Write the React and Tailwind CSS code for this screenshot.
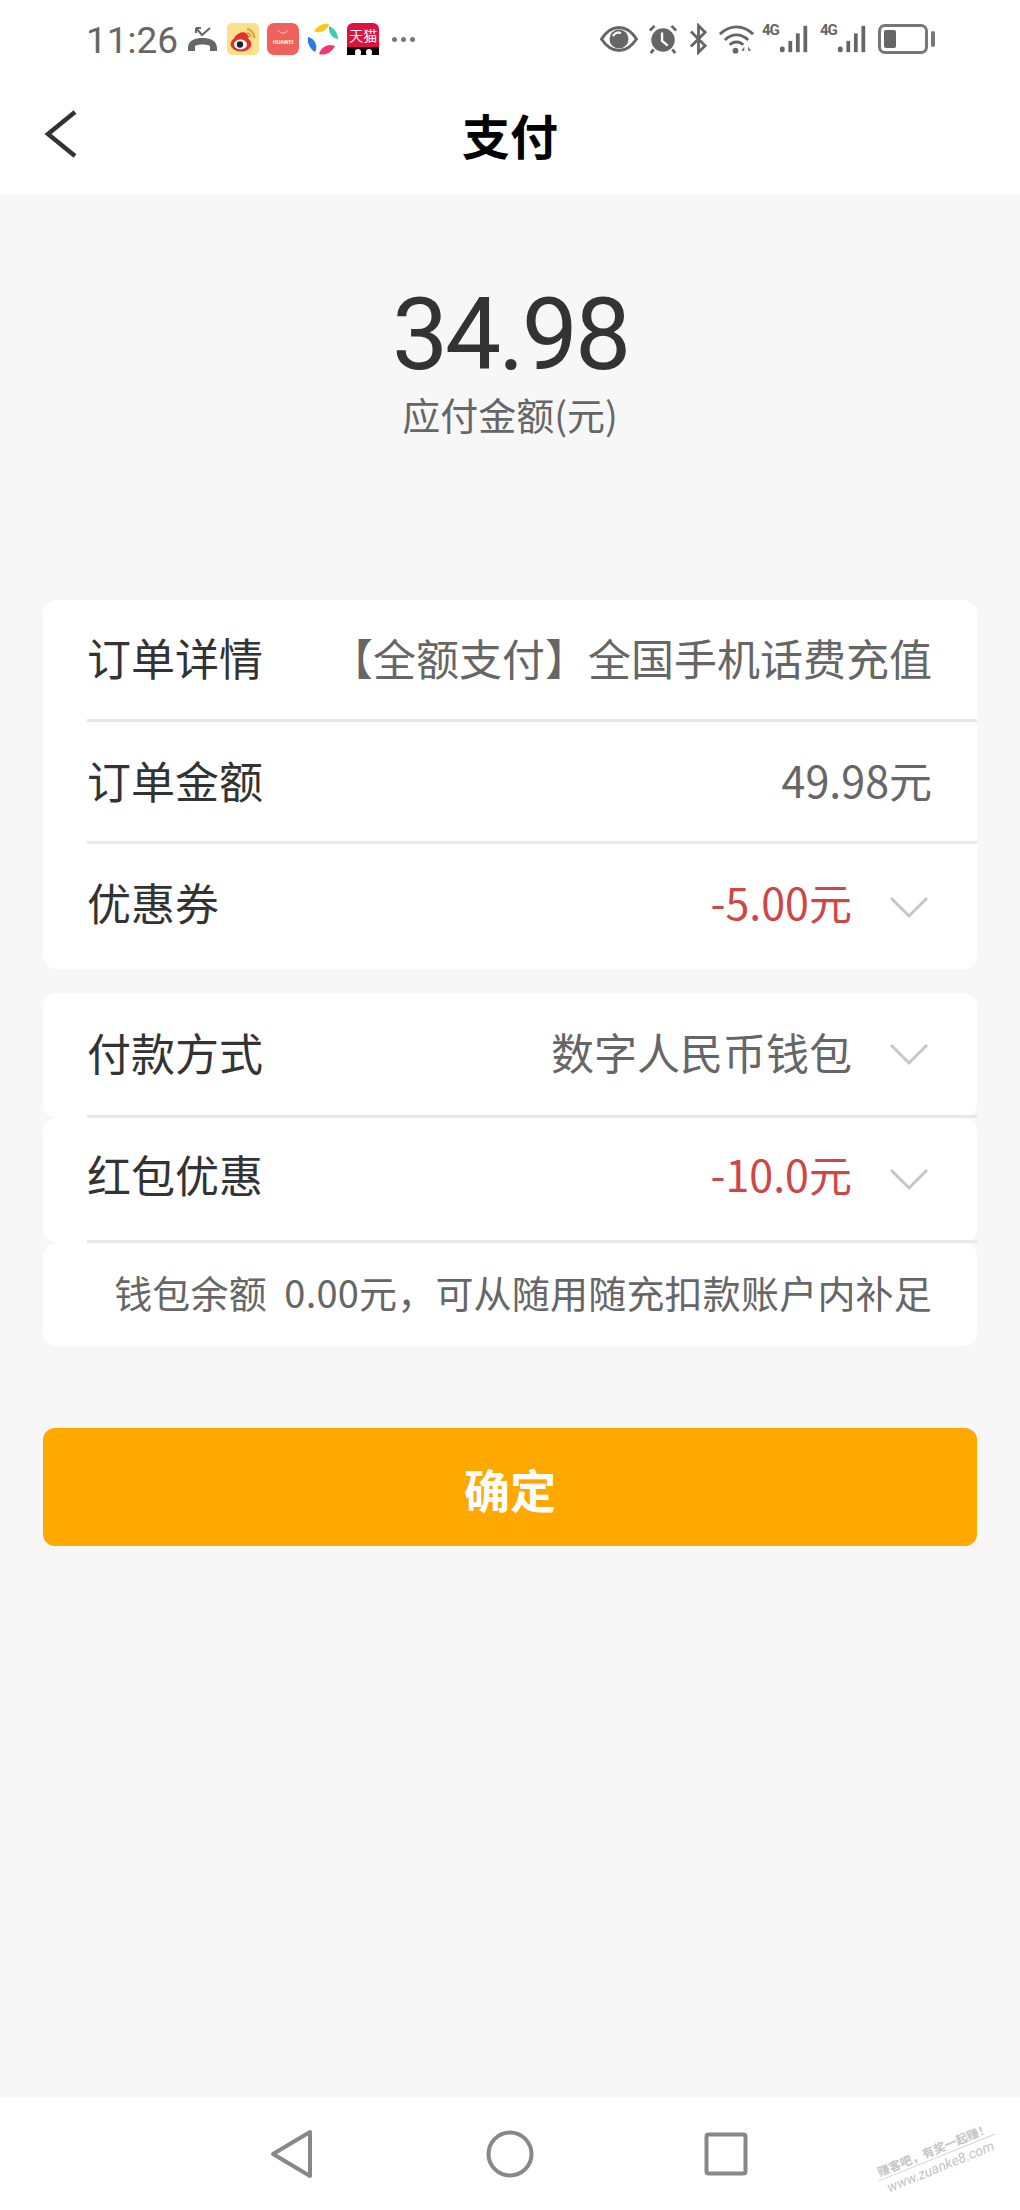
import React from "react";

const cjk = { fontFamily: '"Noto Sans CJK SC", "Noto Sans", sans-serif' };

const Chevron = () => (
  <svg width="40" height="24" viewBox="0 0 40 24" className="ml-[37px] mr-[3px] shrink-0">
    <path d="M2 3 L20 21 L38 3" fill="none" stroke="#c6c6c6" strokeWidth="3" />
  </svg>
);

const Row = ({ label, value, valueClass = "text-[#666666]", arrow, className = "", line = true, textPad = "pb-[4px]" }) => (
  <div className={`bg-white pl-[44px] ${className}`}>
    <div className={`h-full flex items-center justify-between ${line ? "border-b-[3px] border-[#e8e8e8]" : ""}`}>
      <span className={`text-[44px] leading-none text-[#333333] ${textPad}`}>{label}</span>
      <div className="flex items-center pr-[45px]">
        <span className={`text-[43px] leading-none whitespace-nowrap ${valueClass} ${textPad}`}>{value}</span>
        {arrow && <Chevron />}
      </div>
    </div>
  </div>
);

const Signal = () => (
  <div className="flex items-start w-[46px]">
    <span className="text-[15px] leading-none font-bold text-[#666666] mt-[-1px] tracking-[-1px]" style={{ fontFamily: "Roboto, sans-serif" }}>4G</span>
    <svg width="31" height="30" viewBox="0 0 31 30" className="ml-auto">
      <rect x="1" y="23" width="5" height="6" rx="2" fill="#666666" />
      <rect x="10" y="17" width="4" height="12" fill="#666666" />
      <rect x="18" y="9" width="4" height="20" fill="#666666" />
      <rect x="26" y="1" width="4" height="28" fill="#666666" />
    </svg>
  </div>
);

const StatusIcons = () => (
  <div className="flex items-center">
    <svg width="38" height="26" viewBox="0 0 38 26">
      <path d="M1.5 13 C8 3 14 1.5 19 1.5 S30 3 36.5 13 C30 23 24 24.5 19 24.5 S8 23 1.5 13 Z" fill="none" stroke="#666666" strokeWidth="3" />
      <circle cx="19" cy="13" r="9.5" fill="#666666" />
      <path d="M13 10 a7 7 0 0 1 8 -3 a6 6 0 0 0 -8 3 Z" fill="#fff" stroke="#fff" strokeWidth="2" />
    </svg>
    <svg width="30" height="32" viewBox="0 0 32 32" className="ml-[10px]">
      <circle cx="16" cy="17" r="12.5" fill="#666666" />
      <path d="M15 9 V18 L21 23" fill="none" stroke="#fff" strokeWidth="2.5" />
      <path d="M2 7 L7 2 M30 7 L25 2 M6 27 L3 31 M26 27 L29 31" stroke="#666666" strokeWidth="3" />
    </svg>
    <svg width="19" height="32" viewBox="0 0 20 32" className="ml-[11px]">
      <path d="M2 8 L17 23 L10 30 V2 L17 9 L2 24" fill="none" stroke="#666666" strokeWidth="3" />
    </svg>
    <svg width="35" height="30" viewBox="0 0 36 30" className="ml-[11px]">
      <path d="M1 10 C11 0 25 0 35 10 M6 16 C13 9 23 9 30 16 M11 21 C15 17 21 17 25 21" fill="none" stroke="#666666" strokeWidth="3" />
      <circle cx="17" cy="27" r="3" fill="#666666" />
      <path d="M26 23 L23 27 H26 Z M30 23 L33 27 H30 Z" fill="#666666" />
    </svg>
    <div className="ml-[8px]"><Signal /></div>
    <div className="ml-[12px]"><Signal /></div>
    <div className="ml-[12px] flex items-center">
      <div className="w-[50px] h-[30px] border-[3px] border-[#777777] rounded-[7px] p-[3px]">
        <div className="w-[12px] h-full bg-[#666666] rounded-[2px]" />
      </div>
      <div className="w-[4px] h-[16px] bg-[#777777] rounded-[2px] ml-[3px]" />
    </div>
  </div>
);

const AppIcons = () => (
  <div className="flex items-center gap-[8px] ml-[9px]">
    {/* missed call */}
    <svg width="31" height="26" viewBox="0 0 31 26" className="mr-[1px]">
      <path d="M1 22 C1 14 9 12 15.5 12 S30 14 30 22 L30 25 H23 V20 C20 18 11 18 8 20 V25 H1 Z" fill="#666666" />
      <path d="M9 2 L15 9 L23 2 M9 2 H14 M9 2 V7" fill="none" stroke="#666666" strokeWidth="2" />
    </svg>
    {/* weibo */}
    <svg width="32" height="32" viewBox="0 0 32 32">
      <rect width="32" height="32" rx="5" fill="#fbe08d" />
      <ellipse cx="14" cy="21" rx="10.5" ry="7.5" fill="#e0322d" />
      <path d="M7 15 C11 9 17 8 20 11 L22 14 L17 20 Z" fill="#e0322d" />
      <ellipse cx="13.5" cy="21.5" rx="6.5" ry="5" fill="#fff" />
      <circle cx="13" cy="21.5" r="3.2" fill="#222" />
      <path d="M20 6 A8 8 0 0 1 27 15 M20 10 A4 4 0 0 1 23.5 14" fill="none" stroke="#f09a2a" strokeWidth="2" />
    </svg>
    {/* huawei appgallery */}
    <div className="w-[32px] h-[32px] rounded-[7px] bg-[#f0605c] flex flex-col items-center pt-[6px]">
      <svg width="12" height="6" viewBox="0 0 12 6">
        <path d="M1 1 C3 5 9 5 11 1" fill="none" stroke="#ffc9c6" strokeWidth="1" />
      </svg>
      <span className="text-[5.5px] leading-none text-white mt-[5px] font-semibold" style={{ fontFamily: "Roboto, sans-serif" }}>HUAWEI</span>
    </div>
    {/* petal icon */}
    <svg width="32" height="32" viewBox="0 0 32 32">
      <path d="M7 8 C11 2 17 0 22 1 C21 6 14 12 7 8 Z" fill="#f9c81c" />
      <path d="M22 3 C27 5 31 10 31 16 C26 16 21 10 22 3 Z" fill="#3fcba5" />
      <path d="M1 14 C0 20 3 26 8 29 C11 24 9 16 1 14 Z" fill="#2a7de1" />
      <path d="M12 31 C18 33 24 30 28 23 C21 20 14 24 12 31 Z" fill="#ed3a73" />
    </svg>
    {/* tmall */}
    <div className="w-[32px] h-[32px] rounded-t-[6px] overflow-hidden bg-[#e0103f]" style={cjk}>
      <div className="text-[14px] leading-[24px] text-white text-center whitespace-nowrap">天猫</div>
      <div className="h-[8px] bg-black flex justify-center gap-[5px]">
        <div className="w-[6px] h-[7px] mt-[2px] rounded-full bg-white" />
        <div className="w-[6px] h-[7px] mt-[2px] rounded-full bg-white" />
      </div>
    </div>
    {/* more */}
    <div className="flex gap-[4px] ml-[5px]">
      <div className="w-[5px] h-[5px] rounded-full bg-[#777777]" />
      <div className="w-[5px] h-[5px] rounded-full bg-[#777777]" />
      <div className="w-[5px] h-[5px] rounded-full bg-[#777777]" />
    </div>
  </div>
);

export default function App() {
  return (
    <div className="relative w-[1020px] h-[2210px] bg-[#f7f7f7] flex flex-col overflow-hidden" style={cjk}>
      <header className="bg-white h-[195px] shrink-0">
        <div className="h-[78px] flex items-center justify-between pl-[86px] pr-[85px]">
          <div className="flex items-center">
            <span className="text-[37px] leading-none text-[#666666] pt-[3px]" style={{ fontFamily: "Roboto, sans-serif" }}>11:26</span>
            <AppIcons />
          </div>
          <StatusIcons />
        </div>
        <div className="h-[117px] grid grid-cols-[1fr_auto_1fr] items-center px-[44px]">
          <svg width="34" height="48" viewBox="0 0 34 48" className="mb-[6px]">
            <path d="M31 2 L4 24 L31 46" fill="none" stroke="#333333" strokeWidth="4.5" />
          </svg>
          <h1 className="text-[48px] leading-none font-bold text-black pb-[6px]">支付</h1>
          <div />
        </div>
      </header>

      <section className="text-center pt-[90px] shrink-0">
        <div className="text-[100px] leading-[100px] text-[#333333] tracking-[-3px]" style={{ fontFamily: "Roboto, sans-serif" }}>34.98</div>
        <div className="text-[38px] leading-none text-[#666666] mt-[10px]">应付金额(元)</div>
      </section>

      <main className="mx-[43px] w-[934px] mt-[167px] shrink-0">
        <div className="rounded-[14px] overflow-hidden">
          <Row className="h-[122px]" label="订单详情" value="【全额支付】全国手机话费充值" textPad="pb-[5px]" />
          <Row className="h-[122px]" label="订单金额" value="49.98元" />
          <Row className="h-[125px]" label="优惠券" value="-5.00元" valueClass="text-[#cf4646]" arrow line={false} textPad="pb-[10px]" />
        </div>

        <div className="mt-[24px]">
          <Row className="h-[125px] rounded-[14px]" label="付款方式" value="数字人民币钱包" arrow textPad="pb-[5px]" />
          <Row className="h-[125px] rounded-[14px]" label="红包优惠" value="-10.0元" valueClass="text-[#cf4646]" arrow textPad="pb-[11px]" />
          <div className="bg-white rounded-[14px] h-[103px] flex items-center justify-end pr-[45px]">
            <span className="text-[38px] leading-none text-[#666666] whitespace-pre pb-[6px] tracking-[0.2px]">钱包余额  0.00元，可从随用随充扣款账户内补足</span>
          </div>
        </div>

        <button className="w-full h-[118px] mt-[82px] rounded-[12px] bg-[#ffa800] text-white text-[46px] font-bold pt-[2px]">确定</button>
      </main>

      <footer className="mt-auto h-[113px] bg-white relative flex items-center shrink-0">
        <svg width="44" height="50" viewBox="0 0 44 50" className="ml-[270px]">
          <path d="M40 3 L3 25 L40 47 Z" fill="none" stroke="#888888" strokeWidth="4" strokeLinejoin="round" />
        </svg>
        <svg width="48" height="48" viewBox="0 0 48 48" className="ml-[172px]">
          <circle cx="24" cy="24" r="21.5" fill="none" stroke="#888888" strokeWidth="4" />
        </svg>
        <svg width="44" height="44" viewBox="0 0 44 44" className="ml-[170px]">
          <rect x="2.5" y="2.5" width="39" height="39" rx="2" fill="none" stroke="#888888" strokeWidth="4" />
        </svg>
        <div className="absolute left-[874px] top-[43px] w-[126px] -rotate-[22deg] text-center text-[#c4c4c4]">
          <div className="text-[12px] leading-[18px] whitespace-nowrap">
            <span className="font-bold">赚客吧，有奖一起赚！</span>
            <br />
            <span className="italic text-[14px]" style={{ fontFamily: "Roboto, sans-serif" }}>www.zuanke8.com</span>
          </div>
          <div className="absolute left-0 right-0 top-[17px] h-px bg-[#d4d4d4]" />
        </div>
      </footer>
    </div>
  );
}
